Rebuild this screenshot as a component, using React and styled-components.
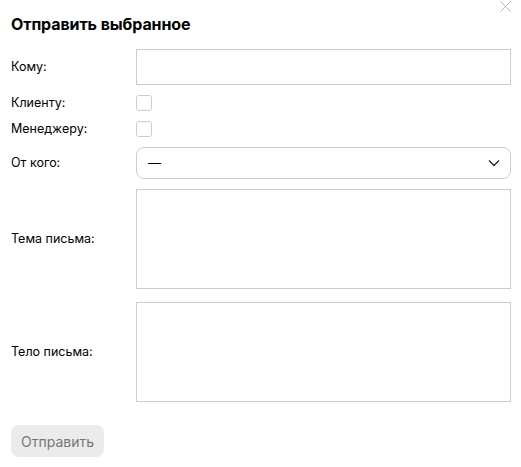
import styled, { createGlobalStyle } from "styled-components";

const GlobalStyle = createGlobalStyle`
    body {
        margin: 0;
        background: #fff;
        font-family: Inter, "Noto Sans", sans-serif;
        color: #000;
    }
`;

const App = () => {
    return (
        <>
            <GlobalStyle />
            <Dialog>
                <Close aria-label="Закрыть">
                    <svg width="11" height="11" viewBox="0 0 11 11">
                        <path d="M0.5 0.5L10.5 10.5M10.5 0.5L0.5 10.5" stroke="#b5b5b5" strokeWidth="1" />
                    </svg>
                </Close>
                <Title>Отправить выбранное</Title>
                <Form>
                    <Label>Кому:</Label>
                    <TextInput />

                    <Label>Клиенту:</Label>
                    <Checkbox />

                    <Label>Менеджеру:</Label>
                    <Checkbox />

                    <Label>От кого:</Label>
                    <Select>
                        <span>—</span>
                        <svg width="12" height="8" viewBox="0 0 12 8">
                            <path d="M1 1.5L6 6.5L11 1.5" fill="none" stroke="#222" strokeWidth="1.3" />
                        </svg>
                    </Select>

                    <Label>Тема письма:</Label>
                    <TextArea />

                    <Label $gapTop>Тело письма:</Label>
                    <TextArea $gapTop />
                </Form>
                <SendBtn>Отправить</SendBtn>
            </Dialog>
        </>
    );
};

const Dialog = styled.div`
    position: relative;
    width: 521px;
    height: 467px;
    box-sizing: border-box;
    padding: 12px 10px 0 11px;
`;

const Close = styled.button`
    position: absolute;
    top: 1px;
    right: 10px;
    border: none;
    background: none;
    padding: 0;
    cursor: pointer;
    display: flex;
`;

const Title = styled.h1`
    margin: 0;
    font-size: 16px;
    font-weight: 700;
    line-height: 24px;
    letter-spacing: -0.1px;
`;

const Form = styled.div`
    display: grid;
    grid-template-columns: 125px 1fr;
    row-gap: 10px;
    align-items: center;
    margin-top: 13px;
`;

const Label = styled.label`
    font-size: 12.5px;
    line-height: 16px;
    margin-top: ${(p) => (p.$gapTop ? "3px" : "0")};
`;

const TextInput = styled.div`
    height: 36px;
    box-sizing: border-box;
    border: 1px solid #cccccc;
`;

const Checkbox = styled.div`
    width: 16px;
    height: 16px;
    box-sizing: border-box;
    border: 1px solid #cccccc;
    border-radius: 3px;
`;

const Select = styled.div`
    height: 32px;
    box-sizing: border-box;
    border: 1px solid #cccccc;
    border-radius: 8px;
    display: flex;
    align-items: center;
    justify-content: space-between;
    padding: 0 10px 0 11px;
    font-size: 13px;
`;

const TextArea = styled.div`
    height: 100px;
    box-sizing: border-box;
    border: 1px solid #cccccc;
    margin-top: ${(p) => (p.$gapTop ? "3px" : "0")};
`;

const SendBtn = styled.button`
    margin-top: 23px;
    width: 93px;
    height: 32px;
    border: none;
    border-radius: 8px;
    background: #ebebeb;
    color: #777;
    font-family: inherit;
    font-size: 14px;
    padding: 0;
`;

export default App;
